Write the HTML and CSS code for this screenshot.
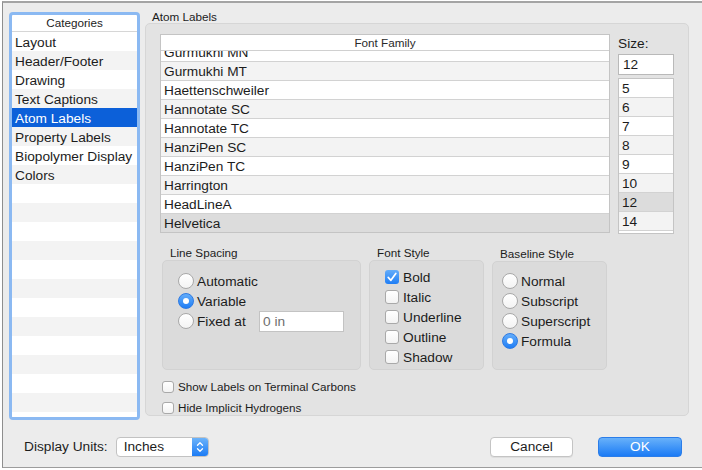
FILE: index.html
```html
<!DOCTYPE html>
<html>
<head>
<meta charset="utf-8">
<link rel="stylesheet" href="styles.css">
</head>
<body>
<div class="dialog">
  <div class="main">
    <div class="sidebar">
      <div class="cat-head">Categories</div>
      <ul class="cat-list">
        <li>Layout</li>
        <li>Header/Footer</li>
        <li>Drawing</li>
        <li>Text Captions</li>
        <li class="sel">Atom Labels</li>
        <li>Property Labels</li>
        <li>Biopolymer Display</li>
        <li>Colors</li>
        <li></li><li></li><li></li><li></li><li></li><li></li>
        <li></li><li></li><li></li><li></li><li></li><li></li><li></li>
      </ul>
    </div>
    <div class="content">
      <div class="content-title">Atom Labels</div>
      <div class="panel">
        <div class="top-row">
          <div class="table">
            <div class="th">Font Family</div>
            <div class="tbody">
              <div class="tr partial">Gurmukhi MN</div>
              <div class="tr">Gurmukhi MT</div>
              <div class="tr">Haettenschweiler</div>
              <div class="tr">Hannotate SC</div>
              <div class="tr">Hannotate TC</div>
              <div class="tr">HanziPen SC</div>
              <div class="tr">HanziPen TC</div>
              <div class="tr">Harrington</div>
              <div class="tr">HeadLineA</div>
              <div class="tr sel">Helvetica</div>
            </div>
          </div>
          <div class="size-col">
            <div class="size-label">Size:</div>
            <div class="size-input">12</div>
            <div class="size-list">
              <div class="srow">5</div>
              <div class="srow">6</div>
              <div class="srow">7</div>
              <div class="srow">8</div>
              <div class="srow">9</div>
              <div class="srow">10</div>
              <div class="srow sel">12</div>
              <div class="srow">14</div>
            </div>
          </div>
        </div>
        <div class="groups">
          <div class="grp g-line">
            <div class="grp-label">Line Spacing</div>
            <div class="grp-box">
              <div class="opt"><span class="radio"></span><span>Automatic</span></div>
              <div class="opt"><span class="radio on"></span><span>Variable</span></div>
              <div class="opt"><span class="radio"></span><span>Fixed at</span><span class="fixed-input">0 in</span></div>
            </div>
          </div>
          <div class="grp g-font">
            <div class="grp-label">Font Style</div>
            <div class="grp-box">
              <div class="opt chk"><span class="cb on"><svg width="14" height="14" viewBox="0 0 14 14"><path d="M3.2 7.4 L5.9 10.3 L10.8 3.4" fill="none" stroke="#fff" stroke-width="1.7" stroke-linecap="round" stroke-linejoin="round"/></svg></span><span>Bold</span></div>
              <div class="opt chk"><span class="cb"></span><span>Italic</span></div>
              <div class="opt chk"><span class="cb"></span><span>Underline</span></div>
              <div class="opt chk"><span class="cb"></span><span>Outline</span></div>
              <div class="opt chk"><span class="cb"></span><span>Shadow</span></div>
            </div>
          </div>
          <div class="grp g-base">
            <div class="grp-label">Baseline Style</div>
            <div class="grp-box">
              <div class="opt"><span class="radio"></span><span>Normal</span></div>
              <div class="opt"><span class="radio"></span><span>Subscript</span></div>
              <div class="opt"><span class="radio"></span><span>Superscript</span></div>
              <div class="opt"><span class="radio on"></span><span>Formula</span></div>
            </div>
          </div>
        </div>
        <div class="checks">
          <div class="scheck"><span class="cb small"></span><span>Show Labels on Terminal Carbons</span></div>
          <div class="scheck"><span class="cb small"></span><span>Hide Implicit Hydrogens</span></div>
        </div>
      </div>
    </div>
  </div>
  <div class="footer">
    <span class="units-label">Display Units:</span>
    <div class="popup">
      <span class="popup-text">Inches</span>
      <span class="stepper"><svg width="8" height="14" viewBox="0 0 8 14"><path d="M1.5 5.2 L4 2.7 L6.5 5.2 M1.5 8.8 L4 11.3 L6.5 8.8" fill="none" stroke="#fff" stroke-width="1.3" stroke-linecap="round" stroke-linejoin="round"/></svg></span>
    </div>
    <div class="spacer"></div>
    <div class="btn btn-cancel">Cancel</div>
    <div class="btn btn-ok">OK</div>
  </div>
</div>
</body>
</html>
```
FILE: styles.css
```css
html, body {
  margin: 0;
  padding: 0;
  background: #ffffff;
}
body {
  font-family: "Liberation Sans", Arial, sans-serif;
  color: #1c1c1c;
  font-size: 13.7px;
}
.dialog {
  margin: 1px 0 0 2px;
  border-top: 2px solid #a4a4a4;
  border-left: 1px solid #8e8e8e;
  border-bottom: 1px solid #9c9c9c;
  background: #ececec;
  height: 464px;
}
.main {
  display: flex;
  align-items: flex-start;
  gap: 5px;
  padding: 9px 0 0 6px;
}
.sidebar {
  width: 131px;
  height: 408px;
  box-sizing: border-box;
  border: 3px solid #8bb9f2;
  border-radius: 4px;
  background: #ffffff;
  overflow: hidden;
}
.cat-head {
  height: 16px;
  line-height: 16px;
  border-bottom: 1px solid #d6d6d6;
  text-align: center;
  font-size: 11.7px;
  color: #222;
}
.cat-list {
  list-style: none;
  margin: 0;
  padding: 0;
}
.cat-list li {
  box-sizing: border-box;
  height: 19px;
  line-height: 19px;
  padding: 1px 0 0 3px;
  font-size: 13.7px;
  background: #ffffff;
}
.cat-list li:nth-child(even) {
  background: #f3f3f3;
}
.cat-list li.sel {
  background: #0c60d9;
  color: #ffffff;
}
.content {
  width: 544px;
  display: flex;
  flex-direction: column;
  margin-top: -1px;
}
.content-title {
  height: 12px;
  line-height: 12px;
  font-size: 11.7px;
  padding-left: 7px;
}
.panel {
  box-sizing: border-box;
  height: 393px;
  border: 1px solid #d6d6d6;
  border-radius: 5px;
  background: #e3e3e3;
  padding: 10px 0 0 14px;
}
.top-row {
  display: flex;
  gap: 8px;
}
.table {
  width: 450px;
  height: 199px;
  box-sizing: border-box;
  border: 1px solid #c4c4c4;
  background: #ffffff;
  display: flex;
  flex-direction: column;
  overflow: hidden;
}
.th {
  height: 15px;
  line-height: 15px;
  border-bottom: 1px solid #d0d0d0;
  text-align: center;
  font-size: 11.7px;
  color: #2a2a2a;
}
.tbody {
  flex: 1;
  overflow: hidden;
}
.tr {
  height: 17px;
  line-height: 18px;
  padding: 1px 0 0 3px;
  border-bottom: 1px solid #d2d2d2;
  font-size: 13.7px;
  background: #ffffff;
}
.tr:nth-child(even) {
  background: #f3f3f3;
}
.tr.partial {
  margin-top: -8px;
}
.tr.sel {
  background: #dcdcdc;
}
.size-col {
  width: 56px;
}
.size-label {
  height: 17px;
  line-height: 18px;
  padding-top: 1px;
  margin-bottom: 2px;
  font-size: 13.7px;
}
.size-input {
  height: 21px;
  box-sizing: border-box;
  border: 1px solid #b9b9b9;
  background: #ffffff;
  line-height: 19px;
  padding-left: 4px;
  font-size: 13.7px;
}
.size-list {
  margin-top: 3px;
  height: 156px;
  box-sizing: border-box;
  border: 1px solid #c4c4c4;
  background: #ffffff;
  overflow: hidden;
}
.srow {
  height: 17px;
  line-height: 18px;
  padding: 1px 0 0 3px;
  border-bottom: 1px solid #d2d2d2;
  font-size: 13.7px;
  background: #ffffff;
}
.srow:nth-child(even) {
  background: #f3f3f3;
}
.srow.sel {
  background: #dcdcdc;
}
.groups {
  display: flex;
  gap: 8px;
  margin: 12px 0 0 2px;
}
.grp-label {
  height: 14px;
  line-height: 13px;
  font-size: 11.7px;
  padding-left: 8px;
}
.grp-box {
  box-sizing: border-box;
  height: 110px;
  border: 1px solid #d2d2d2;
  border-radius: 5px;
  background: #dbdbdb;
}
.g-line { width: 199px; }
.g-line .grp-box { padding: 10px 0 0 15px; }
.g-font { width: 115px; }
.g-font .grp-box { padding: 6px 0 0 15px; }
.g-base { width: 115px; margin-top: 1px; }
.g-base .grp-box { height: 109px; padding: 9px 0 0 9px; }
.opt {
  display: flex;
  align-items: center;
  gap: 3px;
  height: 20px;
  font-size: 13.7px;
}
.opt.chk {
  gap: 4px;
}
.radio {
  width: 16px;
  height: 16px;
  box-sizing: border-box;
  border-radius: 50%;
  border: 1px solid #a9a9a9;
  background: linear-gradient(#ffffff, #f3f3f3);
  display: flex;
  align-items: center;
  justify-content: center;
  flex: none;
}
.radio.on {
  border-color: #2d7ae3;
  background: linear-gradient(#64adfa, #1f7ef5);
}
.radio.on::after {
  content: "";
  width: 6px;
  height: 6px;
  border-radius: 50%;
  background: #ffffff;
}
.fixed-input {
  margin-left: auto;
  margin-right: 16px;
  width: 85px;
  height: 21px;
  box-sizing: border-box;
  border: 1px solid #c3c3c3;
  background: #ffffff;
  line-height: 20px;
  padding-left: 3px;
  color: #6e6e6e;
  font-size: 13.7px;
}
.cb {
  width: 14px;
  height: 14px;
  box-sizing: border-box;
  border: 1px solid #a9a9a9;
  border-radius: 3px;
  background: linear-gradient(#ffffff, #f3f3f3);
  flex: none;
  display: flex;
}
.cb.on {
  border: none;
  background: linear-gradient(#64adfa, #1f7ef5);
}
.cb.small {
  width: 12px;
  height: 12px;
}
.checks {
  margin: 6px 0 0 2px;
}
.scheck {
  display: flex;
  align-items: center;
  gap: 4px;
  height: 21px;
  font-size: 11.7px;
}
.footer {
  display: flex;
  align-items: center;
  height: 21px;
  margin-top: 16px;
  padding: 0 20px 0 21px;
}
.units-label {
  font-size: 13.7px;
}
.popup {
  margin-left: 8px;
  width: 93px;
  height: 20px;
  box-sizing: border-box;
  border: 1px solid #c2c2c2;
  border-radius: 4px;
  background: #ffffff;
  display: flex;
  overflow: hidden;
}
.popup-text {
  flex: 1;
  padding-left: 7px;
  line-height: 18px;
  font-size: 13.7px;
}
.stepper {
  width: 16px;
  background: linear-gradient(#6cb3fa, #1c7cf5);
  display: flex;
  align-items: center;
  justify-content: center;
}
.spacer {
  flex: 1;
}
.btn {
  height: 20px;
  box-sizing: border-box;
  border-radius: 4px;
  font-size: 13.7px;
  display: flex;
  align-items: center;
  justify-content: center;
}
.btn-cancel {
  width: 83px;
  border: 1px solid #c4c4c4;
  background: #ffffff;
  box-shadow: 0 1px 0 rgba(0, 0, 0, 0.06);
}
.btn-ok {
  width: 84px;
  margin-left: 25px;
  border: 1px solid #2b7de9;
  background: linear-gradient(#68b1fa, #1b7bf5);
  color: #ffffff;
}
```
